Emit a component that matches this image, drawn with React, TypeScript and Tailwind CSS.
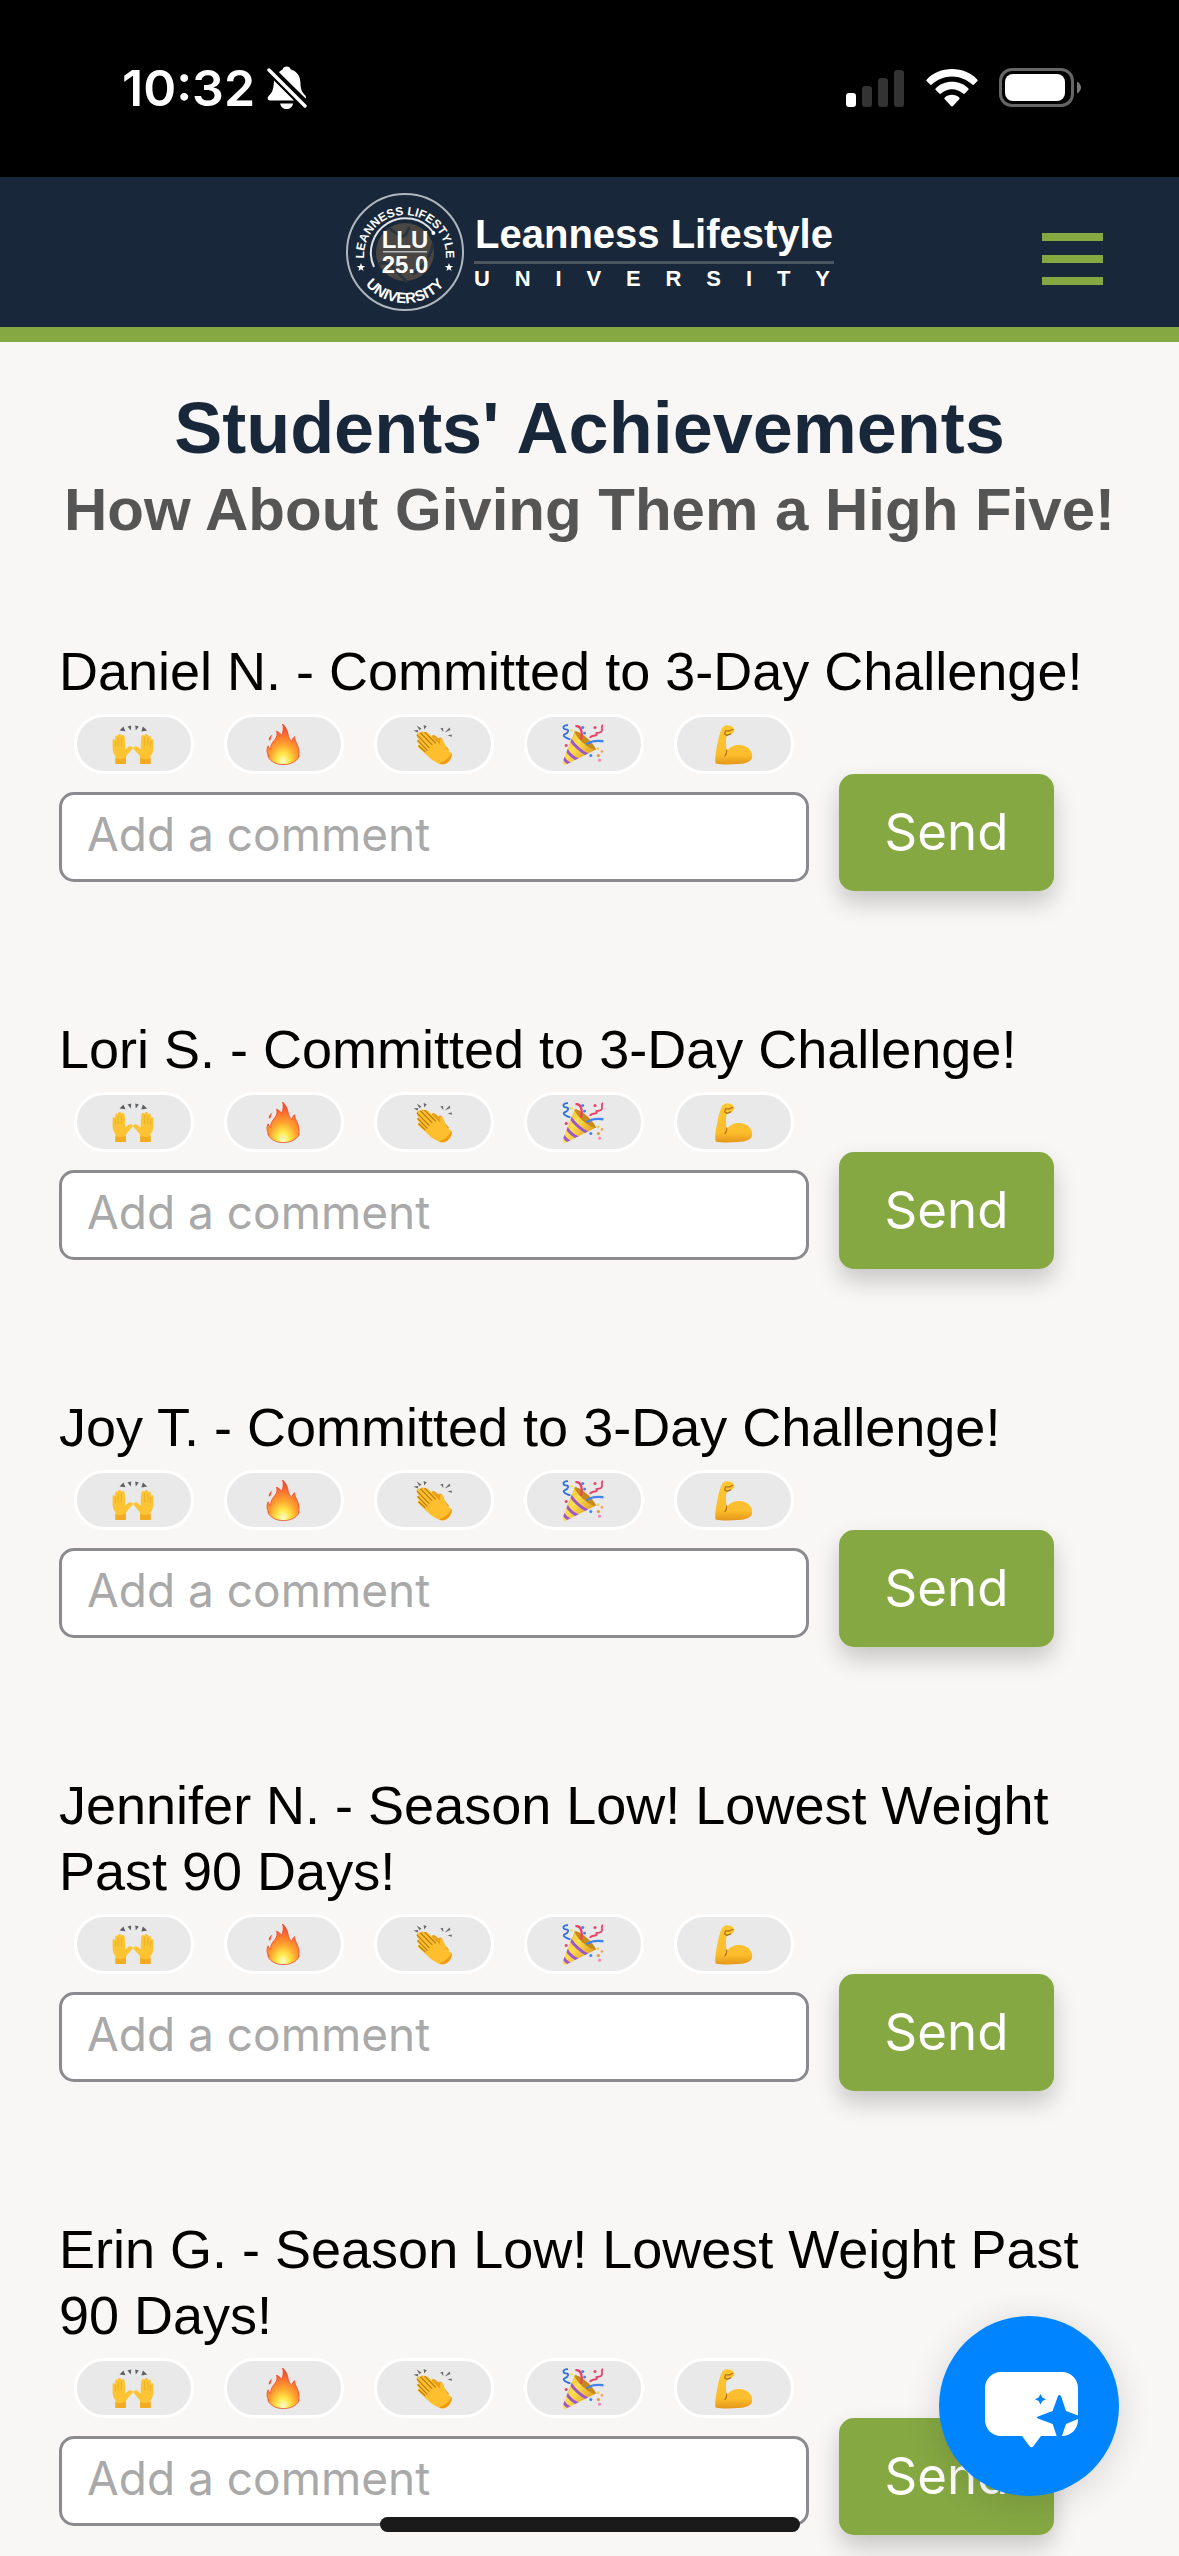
import { useState } from 'react'

const reactions = [
  { id: 'hands', label: 'Raising hands', Icon: RaisedHands },
  { id: 'fire', label: 'Fire', Icon: Fire },
  { id: 'clap', label: 'Clapping hands', Icon: Clap },
  { id: 'party', label: 'Party popper', Icon: Party },
  { id: 'strong', label: 'Flexed biceps', Icon: Biceps },
]

const achievements = [
  { id: 'daniel', text: 'Daniel N. - Committed to 3-Day Challenge!' },
  { id: 'lori', text: 'Lori S. - Committed to 3-Day Challenge!' },
  { id: 'joy', text: 'Joy T. - Committed to 3-Day Challenge!' },
  { id: 'jennifer', text: 'Jennifer N. - Season Low! Lowest Weight Past 90 Days!' },
  { id: 'erin', text: 'Erin G. - Season Low! Lowest Weight Past 90 Days!' },
]

function Hand() {
  return (
    <>
      <path
        d="M3.4 40V32C1.4 30 .6 27 .6 24V16.4C.6 14.8 2.8 14.8 3.2 16.2V13C3.2 11 5.6 11 6 12.4V11.4C6.2 9.4 9 9.4 9.4 11.4V12C10 10.6 12.4 10.8 12.6 12.8L13.2 19V25.4L16.6 22.8C18.8 21.6 21.6 23 20.6 24.8L15 31 13.8 33.6V40Z"
        fill="#fcc432"
      />
      <path d="M3.4 34V40H13.8V33.4C10 35.4 6 35.4 3.4 34Z" fill="#f3ab22" />
      <path d="M3.4 17V23M6.2 14V22M9.4 13V22" stroke="#e9ad25" strokeWidth="0.8" fill="none" />
    </>
  )
}

function RaisedHands() {
  return (
    <svg viewBox="0 0 42 42" className="size-[42px]" aria-hidden="true">
      <g fill="#5d6063">
        <path d="M11.4 2.5 13.4 7.2 7.6 6.6Z" />
        <path d="M15.6 2.4 19.2 1.6 18.8 6.4Z" />
        <path d="M23.2 1.6 26.8 2.4 23.8 6.4Z" />
        <path d="M30.8 2.4 35.2 6.6 29.4 7.4Z" />
      </g>
      <Hand />
      <g transform="translate(42 0) scale(-1 1)">
        <Hand />
      </g>
    </svg>
  )
}

function Fire() {
  return (
    <svg viewBox="0 0 42 42" className="size-[42px]" aria-hidden="true">
      <defs>
        <radialGradient id="flame" cx="0.5" cy="0.92" r="0.85">
          <stop offset="0" stopColor="#fffbd0" />
          <stop offset="0.22" stopColor="#ffe94a" />
          <stop offset="0.5" stopColor="#ffa22e" />
          <stop offset="0.8" stopColor="#fb6a30" />
          <stop offset="1" stopColor="#f2462c" />
        </radialGradient>
      </defs>
      <path
        d="M20.6 0C23 2 25.8 6.6 26.2 11C26.6 13.4 28 16 29.6 17.6C30.4 16 30.8 14 32.6 12.6C32.4 17.4 37 21 37 28C37 30 36.8 31 36.4 32L37.2 31.6C36.6 36 30 40.6 21.4 40.6C12.4 40.6 6.8 36 5.8 31.6L7 32.4C5.6 30.4 5 28.4 5 26.4C5 24.6 5.4 23 6.2 21.8C6.6 23.4 7.4 24.8 8.6 25.6C8.6 21 10 19 12.6 16C15.2 13 15.4 9.6 14.6 7.2C17 8.2 18.6 9.8 19.6 11.4C21.4 8 21.6 3.6 20.6 0Z"
        fill="url(#flame)"
        stroke="#ee4a28"
        strokeWidth="0.8"
      />
      <path d="M10.4 10.6C8 12 6.6 13.8 6.8 16.6L8.6 16C8.6 14 9.6 12.2 10.4 10.6Z" fill="#f4502c" />
    </svg>
  )
}

function Clap() {
  return (
    <svg viewBox="0 0 42 42" className="size-[42px]" aria-hidden="true">
      <g fill="#6a6a6a">
        <path d="M1.4 6.6 6.2 6 5.8 8.6Z" />
        <path d="M4.6 1.4 9.4 4.6 7.6 6.2Z" />
        <path d="M11.6 1 14.8 2.2 12.2 5.6Z" />
        <path d="M28.4 4.6 31 3.8 31.4 8Z" />
        <path d="M37.6 3.6 38.4 6 32.8 8.6Z" />
        <path d="M35.4 11.4 39.6 10.4 40 12.8Z" />
      </g>
      <path
        d="M20 11.6C21.6 10.2 23.6 11.6 26.4 14.4C27.8 12.8 30.4 13.6 30.6 16C32 20 34 22.6 37 25.4L30 37 16 28Z"
        fill="#e9a11b"
      />
      <path
        d="M5 11.4C4 9.4 6.6 7.6 8.4 9C8.6 7 11.4 7 12.6 8.4C14.4 7.2 16 8.6 17.2 10L28.2 21C28.6 18 27.2 16.4 28.4 15C30.4 13.6 32.4 18.6 33 21C34 24.6 36 27.2 39.6 29C41.6 31 37 40.4 31.4 40.6C27 40.6 24 37.8 20 36L6.4 23.4C5 22 6.4 20.2 8 21L5 17.8C4.4 16 6 15.2 7.4 16.4L5 13Z"
        fill="#fdbf2d"
      />
      <path
        d="M5.2 11.2 17 23.4M8.6 9 20 20.6M12.8 8.4 23.4 19M6 16.6 15 26.2M7 22 13 27.6"
        stroke="#b9780f"
        strokeWidth="1.1"
        fill="none"
        strokeLinecap="round"
      />
      <path d="M39.6 29C37 33.4 33 38 27 39.2C33 42.6 40.4 36 39.6 29Z" fill="#ee9a12" />
    </svg>
  )
}

function Party() {
  return (
    <svg viewBox="0 0 42 42" className="size-[42px]" aria-hidden="true">
      <defs>
        <linearGradient id="cone" x1="0" y1="0" x2="1" y2="0.7">
          <stop offset="0" stopColor="#e8a818" />
          <stop offset="0.45" stopColor="#ffdf50" />
          <stop offset="1" stopColor="#d8941a" />
        </linearGradient>
        <clipPath id="cone-clip">
          <path d="M12.6 7.4C20 11 29 18.4 34 25.6L4 40.6C1.6 41.4.4 40 .8 37.6Z" />
        </clipPath>
      </defs>
      <path d="M12.6 7.4C20 11 29 18.4 34 25.6L4 40.6C1.6 41.4.4 40 .8 37.6Z" fill="url(#cone)" />
      <g clipPath="url(#cone-clip)" stroke="#9a55cf" strokeWidth="3" fill="none">
        <path d="M8 15C12 21 18 27 26 31" />
        <path d="M4 25C7 30 11 34 17 36" />
        <path d="M1 33C3 36.6 5 39 9 40" />
      </g>
      <path d="M12.4 7.4C16 5.6 31 17 34 25.6C29 26.6 15 15.6 12.4 7.4Z" fill="#c88a1c" />
      <path d="M13.4 2.2C18.4 1 21 7 19 15.6" stroke="#ee3e63" strokeWidth="2.2" fill="none" />
      <path d="M24.6 20.4C29 16.6 35 16.4 41.4 17.2" stroke="#3f84ee" strokeWidth="2.4" fill="none" />
      <path d="M6 1.2C.6 1 0 5 4 5.4S6 9 2.6 10.4 6 15 8.4 15.4" stroke="#2d6fe0" strokeWidth="1.8" fill="none" />
      <path d="M41 1C38 2 42 6 39 8S33 7.6 34.6 10 29 10.4 28 14" stroke="#e8436c" strokeWidth="1.8" fill="none" />
      <g fill="#3f84ee">
        <circle cx="20.6" cy="3.4" r="1.5" />
        <circle cx="22.6" cy="9.2" r="1.4" />
        <circle cx="28.8" cy="31.6" r="1.5" />
      </g>
      <circle cx="33" cy="3.4" r="1.5" fill="#ee3e63" />
      <circle cx="4.2" cy="21.4" r="1.5" fill="#ee3e63" />
      <circle cx="36" cy="24.8" r="1.4" fill="#f3cf3c" />
      <circle cx="9.4" cy="6.2" r="1.3" fill="#f3e03c" />
      <circle cx="40" cy="27.4" r="1.4" fill="#f0a860" />
      <circle cx="36.4" cy="31.6" r="1.6" fill="#e89a40" />
      <circle cx="37.6" cy="36.2" r="1.6" fill="#ef8fb8" />
    </svg>
  )
}

function Biceps() {
  return (
    <svg viewBox="0 0 42 42" className="size-[42px]" aria-hidden="true">
      <defs>
        <linearGradient id="arm" x1="0" y1="0" x2="0" y2="1">
          <stop offset="0" stopColor="#fcc834" />
          <stop offset="0.75" stopColor="#fcbd2c" />
          <stop offset="1" stopColor="#e5951a" />
        </linearGradient>
      </defs>
      <path
        d="M9.4 5.4C10.4 2.6 13 .8 16.4 1.4C19.6 1.6 22 3 22.2 5.2C23 7.4 21 9.4 18.6 10L14.8 11.4C13.4 17 14 22 14.8 27.4C18 22.6 22 21 27.4 21C34.6 21 40.2 26 40.2 32C40.2 38 34 39.6 26 40C18 40.6 9 40.8 3.6 39.4C2.6 33 4.4 25 5.8 18C6.6 13.4 7.6 9.4 9.4 5.4Z"
        fill="url(#arm)"
      />
      <path
        d="M13 31.6C14.4 30.4 14.8 29 14.8 26M13.6 6.6 17 7 20.6 5.4M13.6 6.6 12.6 9.8 14.8 11.4 18.8 9.8"
        stroke="#b97514"
        strokeWidth="1.3"
        fill="none"
        strokeLinecap="round"
      />
    </svg>
  )
}

function StatusBar() {
  return (
    <div className="flex h-[177px] items-center justify-between bg-black pr-[98px] pb-px pl-[122px] text-white">
      <div className="flex items-center gap-3">
        <span className="text-[50px] leading-[60px] font-semibold">10:32</span>
        <svg viewBox="0 0 40 44" className="h-11 w-10" fill="currentColor" aria-label="Silent mode">
          <path d="M12 6.2C13.6 4.6 14.4 4.2 15.6 3.6C16 1.6 17.4.6 19.6.6S23.2 1.6 23.8 3.6C30 5.4 33.2 10 33.4 16.4C33.6 22.6 34.6 25.6 38.4 29.6C39.4 31 39 32 38.6 32.6Z" />
          <path d="M7 14.4 27 34.4H3C.4 34.4 0 31.8 1.6 30C5 26.6 6.6 24 7 14.4Z" />
          <path d="M13.2 37.4H26C25.6 40.8 23 43 19.6 43S13.6 40.8 13.2 37.4Z" />
          <path d="M2 4 38 40" stroke="#000" strokeWidth="7" />
          <path d="M2 4 38 40" stroke="currentColor" strokeWidth="3.4" strokeLinecap="round" />
        </svg>
      </div>
      <div className="flex items-center">
        <svg viewBox="0 0 58 38" className="h-[38px] w-[58px]" aria-label="Cellular signal">
          <rect x="0" y="24" width="10" height="14" rx="3" fill="#fff" />
          <rect x="16" y="17" width="10" height="21" rx="3" fill="#333" />
          <rect x="32" y="9" width="10" height="29" rx="3" fill="#333" />
          <rect x="48" y="1" width="10" height="37" rx="3" fill="#333" />
        </svg>
        <svg viewBox="0 0 52 38" className="ml-[22px] h-[38px] w-[52px]" fill="#fff" aria-label="Wi-Fi">
          <path d="M26 0C36 0 45 4 51.2 10.4C51.8 11 51.8 11.6 51.2 12.2L48 15.6C47.4 16.2 46.8 16.2 46.2 15.6C40.8 10.4 33.8 7.4 26 7.4S11.2 10.4 5.8 15.6C5.2 16.2 4.6 16.2 4 15.6L.8 12.2C.2 11.6.2 11 .8 10.4C7 4 16 0 26 0Z" />
          <path d="M26 12.8C32.4 12.8 38 15.2 42.2 19.2C42.8 19.8 42.8 20.4 42.2 21L38.8 24.6C38.2 25.2 37.6 25.2 37 24.6C34 21.8 30.2 20.2 26 20.2S18 21.8 15 24.6C14.4 25.2 13.8 25.2 13.2 24.6L9.8 21C9.2 20.4 9.2 19.8 9.8 19.2C14 15.2 19.6 12.8 26 12.8Z" />
          <path d="M26 25.8C28.8 25.8 31.4 26.8 33.2 28.4C33.8 29 33.8 29.6 33.2 30.2L27 37C26.4 37.6 25.6 37.6 25 37L18.8 30.2C18.2 29.6 18.2 29 18.8 28.4C20.6 26.8 23.2 25.8 26 25.8Z" />
        </svg>
        <svg viewBox="0 0 82 40" className="ml-[21px] h-10 w-[82px]" aria-label="Battery">
          <rect x="1.5" y="1.5" width="72" height="36" rx="11.5" fill="none" stroke="#666" strokeWidth="3" />
          <rect x="6" y="6" width="60" height="27" rx="8" fill="#fff" />
          <path d="M78 13.4C80.4 14.6 82 17 82 19.5S80.4 24.4 78 25.6Z" fill="#777" />
        </svg>
      </div>
    </div>
  )
}

function Seal() {
  return (
    <svg
      viewBox="-60 -60 120 120"
      className="size-[120px]"
      fontFamily="'Liberation Sans', sans-serif"
      fontWeight="bold"
      fill="#fff"
      aria-hidden="true"
    >
      <circle r="58" fill="none" stroke="#aeb6bf" strokeWidth="2" />
      <circle r="29" fill="#4a4644" />
      <path
        d="M-16 -24C-6 -16 0 -10 4 -25M-26 12C-14 6 -8 22 2 30M8 22C20 14 26 2 28 -8"
        stroke="#2a3440"
        strokeWidth="3"
        fill="none"
      />
      <path d="M-31 15A34.5 34.5 0 0 1 28 -20" fill="none" stroke="#dfe3e7" strokeWidth="2" />
      <circle cx="28.4" cy="-19" r="2" />
      <path id="seal-top" d="M-41 4A41 41 0 0 1 41 4" fill="none" />
      <path id="seal-bottom" d="M-50 12A51.5 51.5 0 0 0 50 12" fill="none" />
      <text fontSize="12" textAnchor="middle">
        <textPath href="#seal-top" startOffset="50%">
          LEANNESS LIFESTYLE
        </textPath>
      </text>
      <text fontSize="15" textAnchor="middle">
        <textPath href="#seal-bottom" startOffset="50%">
          UNIVERSITY
        </textPath>
      </text>
      <path d="M-44 11 -42.9 14-39.8 14-42.3 15.9-41.4 19-44 17.2-46.6 19-45.7 15.9-48.2 14-45.1 14Z" />
      <path d="M44 11 45.1 14 48.2 14 45.7 15.9 46.6 19 44 17.2 41.4 19 42.3 15.9 39.8 14 42.9 14Z" />
      <text x="0" y="-4" fontSize="24" textAnchor="middle">
        LLU
      </text>
      <rect x="-22" y="-1" width="44" height="1.5" fill="#b9bdc2" />
      <text x="0" y="21" fontSize="24" textAnchor="middle">
        25.0
      </text>
    </svg>
  )
}

function Header() {
  return (
    <header className="grid h-[165px] grid-cols-[1fr_auto_1fr] items-center border-b-[15px] border-[#86a843] bg-[#182739]">
      <a href="#home" className="col-start-2 flex items-center gap-[9px] text-white" aria-label="Leanness Lifestyle University">
        <Seal />
        <span className="flex flex-col font-['Liberation_Sans',Arial,sans-serif] font-bold">
          <span className="px-px text-[40px] leading-[46px]">Leanness Lifestyle</span>
          <span className="mt-1 h-[3px] bg-[#4b5661]" />
          <span className="mt-px flex justify-between pr-1 text-[22px] leading-7" aria-hidden="true">
            {'UNIVERSITY'.split('').map((letter, index) => (
              <span key={index}>{letter}</span>
            ))}
          </span>
        </span>
      </a>
      <button type="button" aria-label="Open menu" className="mt-[14px] mr-[76px] flex w-[61px] flex-col gap-[14px] justify-self-end">
        <span className="h-2 bg-[#86a843]" />
        <span className="h-2 bg-[#86a843]" />
        <span className="h-2 bg-[#86a843]" />
      </button>
    </header>
  )
}

function AchievementItem({ id, text }: { id: string; text: string }) {
  const [comment, setComment] = useState('')

  return (
    <article>
      <h3 className="font-['Liberation_Sans',Arial,sans-serif] text-[54px] leading-[66px] text-black">{text}</h3>
      <div className="mt-[10px] ml-[15px] flex gap-[30px]">
        {reactions.map(({ id: reactionId, label, Icon }) => (
          <button
            key={reactionId}
            type="button"
            aria-label={label}
            className="flex h-[60px] w-[120px] items-center justify-center rounded-full border-[3px] border-white bg-[#e9e9e9] pt-0.5 pr-[3px]"
          >
            <Icon />
          </button>
        ))}
      </div>
      <form className="flex items-start gap-[30px]" onSubmit={(event) => event.preventDefault()}>
        <input
          id={`comment-${id}`}
          type="text"
          aria-label="Add a comment"
          placeholder="Add a comment"
          value={comment}
          onChange={(event) => setComment(event.target.value)}
          className="mt-[18px] h-[90px] w-[750px] rounded-[15px] border-[3px] border-[#8a8a8f] bg-white px-[25px] pb-[6px] text-[46px] text-black placeholder:text-[#a9a9a9]"
        />
        <button
          type="submit"
          className="h-[117px] w-[215px] rounded-[15px] bg-[#86a843] text-[51px] text-white shadow-[0_12px_24px_rgba(0,0,0,0.2)]"
        >
          Send
        </button>
      </form>
    </article>
  )
}

export default function App() {
  return (
    <div className="min-h-screen bg-[#f8f7f5] font-[Inter,'Liberation_Sans',sans-serif]">
      <StatusBar />
      <Header />
      <main className="px-[59px] pt-11 pb-5">
        <div className="-mx-10 text-center font-['Liberation_Sans',Arial,sans-serif] font-bold">
          <h1 className="text-[72px] leading-[84px] text-[#182739]">Students' Achievements</h1>
          <h2 className="text-[60px] leading-[80px] text-[#555]">How About Giving Them a High Five!</h2>
        </div>
        <div className="mt-[88px] flex flex-col gap-[125px]">
          {achievements.map((item) => (
            <AchievementItem key={item.id} id={item.id} text={item.text} />
          ))}
        </div>
      </main>
      <button
        type="button"
        aria-label="Open chat"
        className="fixed right-[60px] bottom-[60px] flex size-[180px] items-center justify-center rounded-full bg-[#0084ff] shadow-[0_6px_36px_rgba(0,0,0,0.14)]"
      >
        <svg viewBox="0 0 94 76" className="mt-2 ml-[6px] h-[76px] w-[94px]" aria-hidden="true">
          <path
            d="M16 0H77C86 0 93 7 93 16V48C93 57 86 64 77 64H56L48.4 74.2C47.2 75.6 45.8 75.6 44.6 74.2L37 64H16C7 64 0 57 0 48V16C0 7 7 0 16 0Z"
            fill="#fff"
          />
          <path
            d="M73 24C74 22.6 75 22.6 76 24L81 39 93 43.4V47L81 52 76.6 65H72L67.6 52 53 46.6C51.6 46 51.6 45 53 44.4L67.6 39Z"
            fill="#0084ff"
          />
          <path d="M55.5 22 57.4 25.6 61 27.2 57.4 29 55.5 32.6 53.6 29 50 27.2 53.6 25.6Z" fill="#0084ff" />
        </svg>
      </button>
      <div className="fixed inset-x-0 bottom-6 mx-auto h-[15px] w-[420px] rounded-full bg-[#1a1a1a]" />
    </div>
  )
}
